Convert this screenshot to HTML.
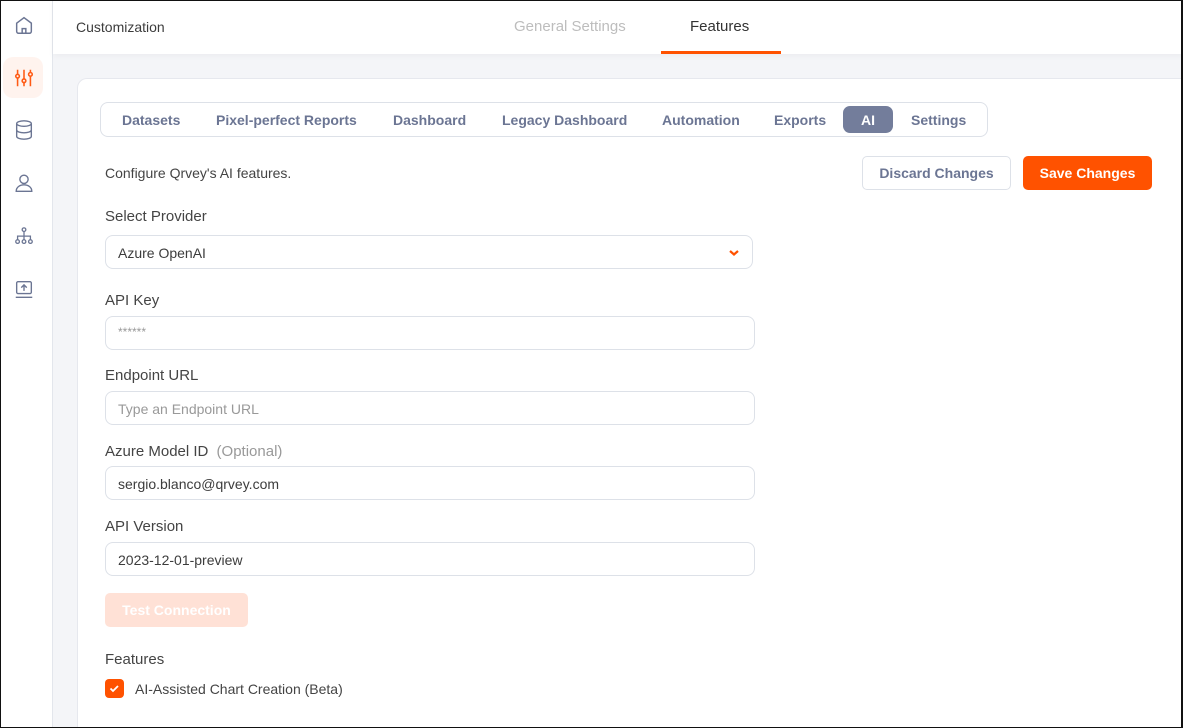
<!DOCTYPE html>
<html style="overflow:hidden;height:728px"><head><meta charset="utf-8"><style>
*{box-sizing:border-box;margin:0;padding:0}
body{width:1183px;height:728px;overflow:hidden;font-family:"Liberation Sans",sans-serif;background:#f4f5f8;position:relative;color:#3c3c3c}
.frame{position:absolute;left:0;top:0;width:1183px;height:728px;border:1px solid #111;border-right-width:2px;pointer-events:none;z-index:10}
.side{position:absolute;left:0;top:0;width:53px;height:728px;background:#fff;border-right:1px solid #e3e6ec}
.side svg{position:absolute;left:13px}
.hdr{position:absolute;left:53px;top:0;width:1130px;height:54px;background:#fff;box-shadow:0 2px 6px rgba(0,0,0,.04)}
.abs{position:absolute}
.card{position:absolute;left:77px;top:78px;width:1106px;height:650px;background:#fff;border:1px solid #e6e8ee;border-right:none;border-bottom:none;border-radius:10px 0 0 0}
.tabs{position:absolute;left:100px;top:102px;width:888px;height:35px;border:1px solid #dde1e8;border-radius:8px}
.tab{position:absolute;top:112px;font-size:14px;font-weight:bold;color:#6b7593}
.lbl{position:absolute;left:105px;font-size:15px;color:#444}
.inp{position:absolute;left:105px;width:650px;height:34px;border:1px solid #dde1e8;border-radius:8px;font-size:14px;color:#3c3c3c;padding:9px 12px}
.btn{position:absolute;top:156px;height:34px;border-radius:5px;font-size:14px;font-weight:bold;text-align:center;line-height:32px}
</style></head><body>
<div class="frame"></div>
<div class="side">
<svg style="top:14px" width="22" height="22" viewBox="0 0 24 24" fill="none" stroke="#6b7593" stroke-width="1.6"><path d="M4 10l8-6 8 6v9a2 2 0 0 1-2 2H6a2 2 0 0 1-2-2z"/><path d="M10 21v-5h4v5"/></svg>
<div class="abs" style="left:3px;top:57px;width:40px;height:41px;background:#fff3ee;border-radius:10px"></div>
<svg style="top:67px" width="22" height="22" viewBox="0 0 24 24" fill="none" stroke="#ff5a14" stroke-width="1.7"><path d="M5 3v18M12 3v18M19 3v18"/><circle cx="5" cy="10" r="2" fill="#fff3ee"/><circle cx="12" cy="15" r="2" fill="#fff3ee"/><circle cx="19" cy="8" r="2" fill="#fff3ee"/></svg>
<svg style="top:119px" width="22" height="22" viewBox="0 0 24 24" fill="none" stroke="#6b7593" stroke-width="1.5"><ellipse cx="12" cy="5" rx="8" ry="3"/><path d="M4 5v14c0 1.7 3.6 3 8 3s8-1.3 8-3V5M4 12c0 1.7 3.6 3 8 3s8-1.3 8-3"/></svg>
<svg style="top:172px" width="22" height="22" viewBox="0 0 24 24" fill="none" stroke="#6b7593" stroke-width="1.5"><circle cx="12" cy="8" r="4.5"/><path d="M3.5 21c0-4.5 4-7 8.5-7s8.5 2.5 8.5 7z"/></svg>
<svg style="top:226px" width="22" height="22" viewBox="0 0 24 24" fill="none" stroke="#6b7593" stroke-width="1.4"><circle cx="12" cy="4" r="2"/><path d="M12 6v5M5 15v-4h14v4M12 11v4"/><circle cx="5" cy="17" r="2"/><circle cx="12" cy="17" r="2"/><circle cx="19" cy="17" r="2"/></svg>
<svg style="top:278px" width="22" height="22" viewBox="0 0 24 24" fill="none" stroke="#6b7593" stroke-width="1.5"><rect x="4" y="4" width="16" height="13" rx="1.5"/><path d="M3 21h18M12 14V8M9 10.5l3-3 3 3"/></svg>
</div>
<div class="hdr">
<div class="abs" style="left:23px;top:19px;font-size:14px;color:#3c3c3c">Customization</div>
<div class="abs" style="left:461px;top:18px;font-size:15px;color:#bdbdbd">General Settings</div>
<div class="abs" style="left:637px;top:18px;font-size:15px;color:#333">Features</div>
<div class="abs" style="left:608px;top:51px;width:120px;height:3px;background:#ff5200"></div>
</div>
<div class="card"></div>
<div class="tabs"></div>
<div class="abs" style="left:843px;top:106px;width:50px;height:27px;background:#737d9b;border-radius:7px"></div>
<div class="tab" style="left:122px">Datasets</div>
<div class="tab" style="left:216px">Pixel-perfect Reports</div>
<div class="tab" style="left:393px">Dashboard</div>
<div class="tab" style="left:502px">Legacy Dashboard</div>
<div class="tab" style="left:662px">Automation</div>
<div class="tab" style="left:774px">Exports</div>
<div class="tab" style="left:861px;color:#fff">AI</div>
<div class="tab" style="left:911px">Settings</div>
<div class="abs" style="left:105px;top:165px;font-size:14px;color:#444">Configure Qrvey's AI features.</div>
<div class="btn" style="left:862px;width:149px;border:1px solid #dde1e8;color:#6b7593;background:#fff">Discard Changes</div>
<div class="btn" style="left:1023px;width:129px;background:#ff5200;color:#fff;line-height:34px">Save Changes</div>
<div class="lbl" style="top:208px">Select Provider</div>
<div class="inp" style="top:235px;width:648px">Azure OpenAI
<svg class="abs" style="right:12px;top:13px" width="12" height="8" viewBox="0 0 12 8"><path d="M2 2l4 3.5L10 2" fill="none" stroke="#ff5200" stroke-width="2.2"/></svg></div>
<div class="lbl" style="top:292px">API Key</div>
<div class="inp" style="top:316px;color:#999;font-size:12px;padding-top:8px">******</div>
<div class="lbl" style="top:367px">Endpoint URL</div>
<div class="inp" style="top:391px;color:#999">Type an Endpoint URL</div>
<div class="lbl" style="top:443px">Azure Model ID <span style="color:#999;margin-left:4px">(Optional)</span></div>
<div class="inp" style="top:466px">sergio.blanco@qrvey.com</div>
<div class="lbl" style="top:518px">API Version</div>
<div class="inp" style="top:542px">2023-12-01-preview</div>
<div class="abs" style="left:105px;top:593px;width:143px;height:34px;background:#ffe1d6;border-radius:5px;color:#fff;font-weight:bold;font-size:14px;text-align:center;line-height:34px">Test Connection</div>
<div class="lbl" style="top:651px">Features</div>
<div class="abs" style="left:105px;top:679px;width:19px;height:19px;background:#ff5200;border-radius:4px"><svg width="19" height="19" viewBox="0 0 19 19"><path d="M5.5 9.5l2.5 2.5 5-5" fill="none" stroke="#fff" stroke-width="1.8"/></svg></div>
<div class="abs" style="left:135px;top:681px;font-size:14px;color:#444">AI-Assisted Chart Creation (Beta)</div>
</body></html>
